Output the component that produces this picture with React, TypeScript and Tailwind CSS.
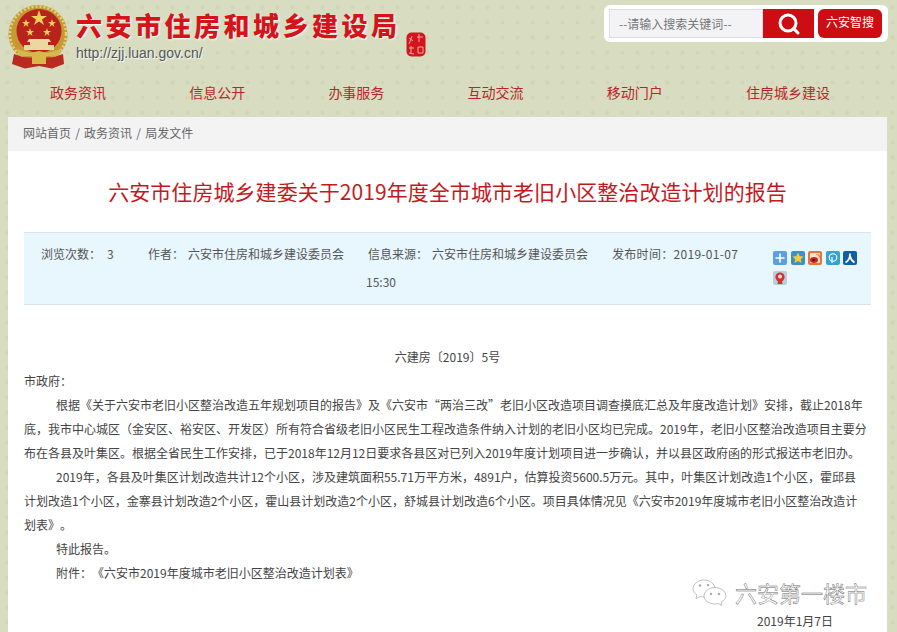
import { Search } from "lucide-react";

const NAV = ["政务资讯", "信息公开", "办事服务", "互动交流", "移动门户", "住房城乡建设"];

const BODY = [
  { indent: true, text: "根据《关于六安市老旧小区整治改造五年规划项目的报告》及《六安市“两治三改”老旧小区改造项目调查摸底汇总及年度改造计划》安排，截止2018年" },
  { indent: false, text: "底，我市中心城区（金安区、裕安区、开发区）所有符合省级老旧小区民生工程改造条件纳入计划的老旧小区均已完成。2019年，老旧小区整治改造项目主要分" },
  { indent: false, text: "布在各县及叶集区。根据全省民生工作安排，已于2018年12月12日要求各县区对已列入2019年度计划项目进一步确认，并以县区政府函的形式报送市老旧办。" },
  { indent: true, text: "2019年，各县及叶集区计划改造共计12个小区，涉及建筑面积55.71万平方米，4891户，估算投资5600.5万元。其中，叶集区计划改造1个小区，霍邱县" },
  { indent: false, text: "计划改造1个小区，金寨县计划改造2个小区，霍山县计划改造2个小区，舒城县计划改造6个小区。项目具体情况见《六安市2019年度城市老旧小区整治改造计" },
  { indent: false, text: "划表》。" },
  { indent: true, text: "特此报告。" },
  { indent: true, text: "附件：《六安市2019年度城市老旧小区整治改造计划表》" },
];

function Emblem() {
  return (
    <svg width="60" height="65" viewBox="0 0 60 65" className="shrink-0">
      <ellipse cx="30" cy="30" rx="29.5" ry="29" fill="#c39a35" />
      <ellipse cx="30" cy="30" rx="28" ry="27.5" fill="none" stroke="#e6d27f" strokeWidth="2.4" strokeDasharray="2 2" />
      <ellipse cx="31" cy="27" rx="22.5" ry="22" fill="#b8231c" />
      <polygon points="31,6 33,12 39,12 34,15.5 36,21 31,17.5 26,21 28,15.5 23,12 29,12" fill="#f0cf5a" />
      <polygon points="18,15 19,18 22,18 19.5,20 20.5,23 18,21 15.5,23 16.5,20 14,18 17,18" fill="#f0cf5a" />
      <polygon points="44,15 45,18 48,18 45.5,20 46.5,23 44,21 41.5,23 42.5,20 40,18 43,18" fill="#f0cf5a" />
      <polygon points="22,24 23,27 26,27 23.5,29 24.5,32 22,30 19.5,32 20.5,29 18,27 21,27" fill="#f0cf5a" />
      <polygon points="39,24 40,27 43,27 40.5,29 41.5,32 39,30 36.5,32 37.5,29 35,27 38,27" fill="#f0cf5a" />
      <path d="M21 35 L41 35 L43 38 L40 38 L40 41 L46 41 L46 46 L16 46 L16 41 L22 41 L22 38 L19 38 Z" fill="#e9d9a0" />
      <path d="M9 45 L22 49 L31 47 L40 49 L53 45 L51 52 L11 52 Z" fill="#d8b84a" />
      <path d="M6 50 L15 53 L31 54 L46 53 L55 50 L56 60 L44 64.5 L31 62 L17 64.5 L4 60 Z" fill="#b92a20" />
      <path d="M24 52 L38 52 L38 60 L24 60 Z" fill="#d8b84a" />
    </svg>
  );
}

function Seal() {
  return (
    <svg width="20" height="25" viewBox="0 0 20 25" className="shrink-0">
      <rect x="0.5" y="0.5" width="19" height="24" rx="5" fill="#d3161b" />
      <path d="M3 6 L7 9 M6 4 L3 12 M13 2 L13 10 M11 5 L17 5 M3 16 L8 16 M5 14 L5 21 M3 21 L8 22 M12 15 L17 15 L17 21 L12 21 Z" stroke="#efa9a5" strokeWidth="1" fill="none" />
    </svg>
  );
}

function ShareIcons() {
  return (
    <div className="flex w-[88px] flex-wrap gap-x-[3.5px] gap-y-[6px]">
      <svg width="14" height="14" viewBox="0 0 14 14">
        <rect width="14" height="14" rx="2" fill="#5c9fe0" />
        <path d="M7 2.5 V11.5 M2.5 7 H11.5" stroke="#fff" strokeWidth="1.6" />
      </svg>
      <svg width="14" height="14" viewBox="0 0 14 14">
        <rect width="14" height="14" rx="2" fill="#3d8fc4" />
        <polygon points="7,1.5 8.7,5.2 12.6,5.6 9.7,8.2 10.5,12 7,10 3.5,12 4.3,8.2 1.4,5.6 5.3,5.2" fill="#f4cf3a" />
      </svg>
      <svg width="14" height="14" viewBox="0 0 14 14">
        <rect width="14" height="14" rx="2" fill="#e8743a" />
        <rect x="2" y="2" width="10" height="10" rx="1" fill="#f6e3d2" />
        <ellipse cx="6" cy="9" rx="4" ry="3" fill="#d4231f" />
        <circle cx="5.6" cy="9" r="1.2" fill="#222" />
        <path d="M8.5 3.5 A3 3 0 0 1 11.5 6.5" stroke="#e8743a" strokeWidth="1.2" fill="none" />
      </svg>
      <svg width="14" height="14" viewBox="0 0 14 14">
        <rect width="14" height="14" rx="2" fill="#37a3cf" />
        <circle cx="7" cy="6.5" r="3.8" stroke="#fff" strokeWidth="1.1" fill="none" />
        <path d="M6 6 V12" stroke="#fff" strokeWidth="1.1" />
      </svg>
      <svg width="14" height="14" viewBox="0 0 14 14">
        <rect width="14" height="14" rx="2" fill="#0f5fa8" />
        <path d="M7 2.5 C7 6 6 9.5 2.5 11.5 M7 5 C7.5 8 9 10 11.5 11.5" stroke="#fff" strokeWidth="1.7" fill="none" />
      </svg>
      <svg width="14" height="14" viewBox="0 0 14 14">
        <rect width="14" height="14" rx="2" fill="#b9cfe0" />
        <circle cx="7" cy="6" r="4.6" fill="#d8302a" />
        <circle cx="7" cy="5.6" r="2" fill="#f7e7e4" />
        <path d="M5 10 L9 10 L9.5 13 L4.5 13 Z" fill="#d8302a" />
      </svg>
    </div>
  );
}

function Watermark() {
  return (
    <div className="absolute right-[30px] top-[578px] flex h-7 items-center gap-2">
      <svg width="35" height="27" viewBox="0 0 35 27" fill="#fff" stroke="#a5a5a5" strokeWidth="0.7">
        <path d="M12 1 C6 1 1 5 1 9.5 C1 12.5 3 14.5 5 16 L4 19.5 L8.5 17.5 C10 18 11.5 18 13 18 C19 17.5 23 14 23 9.5 C23 5 18 1 12 1 Z" />
        <path d="M23 8.5 C17 8.5 12 12.5 12 17 C12 21.5 17 25 23 25 C24.5 25 25.5 24.8 26.5 24.5 L30 26.5 L29.2 23 C32 21.5 34 19.5 34 17 C34 12.5 29 8.5 23 8.5 Z" />
        <circle cx="19" cy="15" r="0.9" fill="#999" />
        <circle cx="27" cy="15" r="0.9" fill="#999" />
        <circle cx="8" cy="6.5" r="0.9" fill="#999" />
        <circle cx="16" cy="6" r="0.9" fill="#999" />
      </svg>
      <span className="text-[22px] leading-7 text-white [-webkit-text-stroke:0.45px_#666]">六安第一楼市</span>
    </div>
  );
}

export default function App() {
  return (
    <div className="relative h-[632px] w-[897px] overflow-hidden bg-[#d8dcc0] bg-[radial-gradient(#d1d6b8_1.5px,transparent_2.5px)] bg-size-[15px_15px] font-['Noto_Sans_CJK_SC','Microsoft_YaHei',sans-serif] [text-spacing-trim:space-all]">
      {/* Header */}
      <header className="flex h-[72px]">
        <div className="ml-2 mt-1">
          <Emblem />
        </div>
        <div className="ml-2">
          <h1 className="mt-[7px] whitespace-nowrap text-[26px] font-black leading-9 tracking-[3.5px] text-[#d5141a] [text-shadow:1px_1px_2px_#fff]">
            六安市住房和城乡建设局
          </h1>
          <div className="mt-[2px] font-['Liberation_Sans',sans-serif] text-sm leading-4 text-[#555] [text-shadow:1px_1px_1px_#fff]">
            http://zjj.luan.gov.cn/
          </div>
        </div>
        <div className="ml-[5px] mt-[32px]">
          <Seal />
        </div>
        <div className="ml-auto mr-[9px] mt-[5px] flex h-[37px] w-[284px] items-center rounded-md bg-white pl-[5px]">
          <div className="flex h-[29px] w-[154px] items-center border border-[#ddd] bg-[#f3f3f5] pl-[9px] text-xs text-[#777]">
            --请输入搜索关键词--
          </div>
          <button className="flex h-[29px] w-[51px] items-center justify-center bg-[#cc0e14]">
            <Search size={24} strokeWidth={3} className="text-white" />
          </button>
          <button className="ml-1 h-[29px] w-16 rounded-md bg-[#cc0e14] pb-[3px] text-xs text-white">六安智搜</button>
        </div>
      </header>

      {/* Nav */}
      <nav className="ml-2 flex h-[45px] items-center pb-[6px]">
        {NAV.map((item) => (
          <a key={item} className="w-[139.2px] shrink-0 pl-[42px] text-sm whitespace-nowrap text-[#b8262a]">
            {item}
          </a>
        ))}
      </nav>

      {/* Main panel */}
      <main className="mx-2 h-[515px] w-[879px] bg-white">
        <div className="flex h-[34px] items-center bg-[#f3f3f4] pb-[2px] pl-[15px] text-xs text-[#666] [word-spacing:1.5px]">
          网站首页 / 政务资讯 / 局发文件
        </div>
        <h2 className="flex h-[81px] items-center justify-center text-[21px] font-normal tracking-[0.06px] text-[#c4191e]">
          六安市住房城乡建委关于2019年度全市城市老旧小区整治改造计划的报告
        </h2>

        <div className="mx-4 flex h-[73px] w-[847px] border-y border-[#d9e4e9] bg-[#e8f6fd] text-xs text-[#555]">
          <div className="w-[749px] shrink-0 pt-[7px] leading-7">
            <div className="flex whitespace-nowrap">
              <span className="ml-[17px] w-[107px]">
                浏览次数：<span className="ml-[6px]">3</span>
              </span>
              <span className="w-[220px]">
                作者：<span className="ml-[4px]">六安市住房和城乡建设委员会</span>
              </span>
              <span className="w-[244px]">
                信息来源：<span className="ml-[4px]">六安市住房和城乡建设委员会</span>
              </span>
              <span className="tracking-[0.3px]">发布时间：2019-01-07</span>
            </div>
            <div className="ml-[342px]">15:30</div>
          </div>
          <div className="pt-[18px]">
            <ShareIcons />
          </div>
        </div>

        <div className="mx-4 pt-10 text-xs leading-6 text-[#444]">
          <p className="text-center">六建房〔2019〕5号</p>
          <p>市政府：</p>
          {BODY.map((line) => (
            <p key={line.text} className={line.indent ? "pl-8 whitespace-nowrap" : "whitespace-nowrap"}>
              {line.text}
            </p>
          ))}
          <p className="mt-6 pl-[733px] whitespace-nowrap">2019年1月7日</p>
        </div>
      </main>

      <Watermark />
    </div>
  );
}
